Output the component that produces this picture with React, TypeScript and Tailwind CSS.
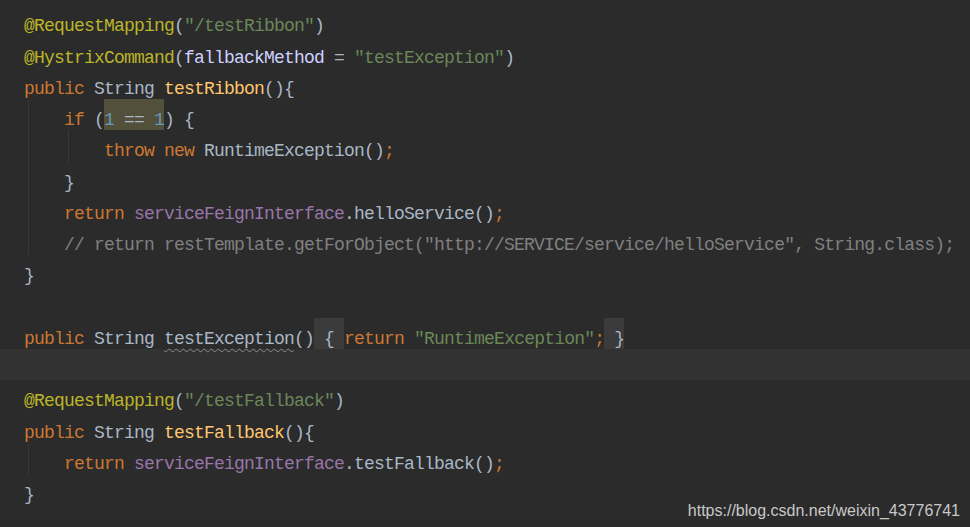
import React from "react";

type Tok = { t: string; c: string; extra?: string };

const DEF = "text-[#a9b7c6]";
const KW = "text-[#cc7832]";
const ANN = "text-[#bbb529]";
const STR = "text-[#6a8759]";
const ATTR = "text-[#d0d0ff]";
const METH = "text-[#ffc66d]";
const FIELD = "text-[#9876aa]";
const NUM = "text-[#6897bb]";
const COM = "text-[#808080]";

function T({ tok }: { tok: Tok }) {
  return (
    <span className={`whitespace-pre pt-[11px] leading-[20px] ${tok.c} ${tok.extra ?? ""}`}>
      {tok.t}
    </span>
  );
}

function Guide() {
  return (
    <span className="w-[40px] shrink-0 pl-[4px]">
      <span className="block h-full w-px bg-[#383838]" />
    </span>
  );
}

function Row({
  guides = 0,
  toks = [],
  current = false,
}: {
  guides?: number;
  toks?: Tok[];
  current?: boolean;
}) {
  return (
    <div className={`flex h-[31.25px] pl-[24px] ${current ? "bg-[#323232]" : ""}`}>
      {Array.from({ length: guides }).map((_, i) => (
        <Guide key={i} />
      ))}
      {toks.map((tok, i) => (
        <T key={i} tok={tok} />
      ))}
    </div>
  );
}

export default function App() {
  const HL = "bg-[#52503a]";
  const FOLD = "bg-[#3b3b3b]";
  return (
    <div
      className="relative w-[970px] h-[527px] overflow-hidden bg-[#2b2b2b] pt-[5.25px] text-[18px] tracking-[-0.8px]"
      style={{ fontFamily: '"Liberation Mono", "DejaVu Sans Mono", monospace' }}
    >
      <Row
        toks={[
          { t: "@RequestMapping", c: ANN },
          { t: "(", c: DEF },
          { t: '"/testRibbon"', c: STR },
          { t: ")", c: DEF },
        ]}
      />
      <Row
        toks={[
          { t: "@HystrixCommand", c: ANN },
          { t: "(", c: DEF },
          { t: "fallbackMethod", c: ATTR },
          { t: " = ", c: DEF },
          { t: '"testException"', c: STR },
          { t: ")", c: DEF },
        ]}
      />
      <Row
        toks={[
          { t: "public ", c: KW },
          { t: "String ", c: DEF },
          { t: "testRibbon", c: METH },
          { t: "(){", c: DEF },
        ]}
      />
      <Row
        guides={1}
        toks={[
          { t: "if ", c: KW },
          { t: "(", c: DEF },
          { t: "1", c: NUM, extra: HL },
          { t: " == ", c: DEF, extra: HL },
          { t: "1", c: NUM, extra: HL },
          { t: ") {", c: DEF },
        ]}
      />
      <Row
        guides={2}
        toks={[
          { t: "throw new ", c: KW },
          { t: "RuntimeException()", c: DEF },
          { t: ";", c: KW },
        ]}
      />
      <Row guides={1} toks={[{ t: "}", c: DEF }]} />
      <Row
        guides={1}
        toks={[
          { t: "return ", c: KW },
          { t: "serviceFeignInterface", c: FIELD },
          { t: ".helloService()", c: DEF },
          { t: ";", c: KW },
        ]}
      />
      <Row
        guides={1}
        toks={[
          {
            t: '// return restTemplate.getForObject("http://SERVICE/service/helloService", String.class);',
            c: COM,
          },
        ]}
      />
      <Row toks={[{ t: "}", c: DEF }]} />
      <Row />
      <Row
        toks={[
          { t: "public ", c: KW },
          { t: "String ", c: DEF },
          {
            t: "testException",
            c: DEF,
            extra: "underline decoration-wavy decoration-[#8c8c8c] decoration-1 underline-offset-[4px]",
          },
          { t: "()", c: DEF },
          { t: " { ", c: DEF, extra: FOLD },
          { t: "return ", c: KW },
          { t: '"RuntimeException"', c: STR },
          { t: ";", c: KW },
          { t: " }", c: DEF, extra: FOLD },
        ]}
      />
      <Row current />
      <Row
        toks={[
          { t: "@RequestMapping", c: ANN },
          { t: "(", c: DEF },
          { t: '"/testFallback"', c: STR },
          { t: ")", c: DEF },
        ]}
      />
      <Row
        toks={[
          { t: "public ", c: KW },
          { t: "String ", c: DEF },
          { t: "testFallback", c: METH },
          { t: "(){", c: DEF },
        ]}
      />
      <Row
        guides={1}
        toks={[
          { t: "return ", c: KW },
          { t: "serviceFeignInterface", c: FIELD },
          { t: ".testFallback()", c: DEF },
          { t: ";", c: KW },
        ]}
      />
      <Row toks={[{ t: "}", c: DEF }]} />

      <div
        className="absolute right-[10px] bottom-[8px] text-[16px] tracking-normal text-[#c8c8c8] leading-none"
        style={{ fontFamily: '"Liberation Sans", Arial, sans-serif' }}
      >
        https://blog.csdn.net/weixin_43776741
      </div>
    </div>
  );
}
